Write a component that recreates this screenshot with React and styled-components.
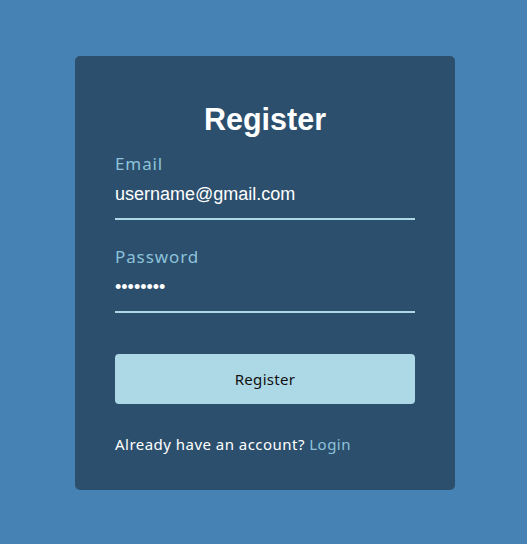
import React, { useState } from 'react';
import styled, { createGlobalStyle } from 'styled-components';

const GlobalStyle = createGlobalStyle`
  body {
    margin: 0;
    background-color: #4682b4;
    font-family: 'Noto Sans', Lato, sans-serif;
  }
`;

const Page = styled.div`
  width: 100%;
  min-height: 544px;
  display: flex;
  justify-content: center;
  padding: 56px 0 0 3px;
  box-sizing: border-box;
`;
const Card = styled.form`
  width: 380px;
  height: 434px;
  box-sizing: border-box;
  padding: 44px 40px 36px;
  background-color: #2c4f6e;
  border-radius: 5px;
  display: flex;
  flex-direction: column;
`;
const Title = styled.h1`
  margin: 0 0 15px;
  color: white;
  font-family: 'Liberation Sans', Arial, sans-serif;
  font-size: 30.5px;
  line-height: 38px;
  font-weight: 700;
  text-align: center;
`;
const Field = styled.div`
  display: flex;
  flex-direction: column;
  margin-bottom: ${props => props.last ? '41px' : '26px'};
`;
const Label = styled.label`
  color: #8dc3da;
  font-size: 17px;
  line-height: 22px;
  letter-spacing: 0.9px;
`;
const Input = styled.input`
  margin-top: 3px;
  height: 42px;
  box-sizing: border-box;
  padding: 0 0 8px;
  border: none;
  border-bottom: 2px solid #add8e6;
  background: transparent;
  color: white;
  font-family: 'Liberation Sans', Arial, sans-serif;
  font-size: 18px;
  outline: none;
`;
const Button = styled.button`
  height: 50px;
  border: none;
  border-radius: 4px;
  background-color: #add8e6;
  color: #111;
  font-family: inherit;
  font-size: 15px;
  letter-spacing: 0.3px;
  cursor: pointer;
`;
const Footer = styled.p`
  margin: 30px 0 0;
  color: white;
  font-size: 15px;
  line-height: 20px;
  letter-spacing: 0.47px;
`;
const Link = styled.a`
  color: #8dc3da;
  text-decoration: none;
`;

const App = () => {
  const [email, setEmail] = useState('username@gmail.com');
  const [password, setPassword] = useState('password');
  return (
    <>
      <GlobalStyle />
      <Page>
        <Card onSubmit={e => e.preventDefault()}>
          <Title>Register</Title>
          <Field>
            <Label>Email</Label>
            <Input value={email} onChange={e => setEmail(e.target.value)} />
          </Field>
          <Field last>
            <Label>Password</Label>
            <Input type="password" value={password} onChange={e => setPassword(e.target.value)} />
          </Field>
          <Button type="submit">Register</Button>
          <Footer>
            Already have an account? <Link href="#">Login</Link>
          </Footer>
        </Card>
      </Page>
    </>
  );
};

export default App;
